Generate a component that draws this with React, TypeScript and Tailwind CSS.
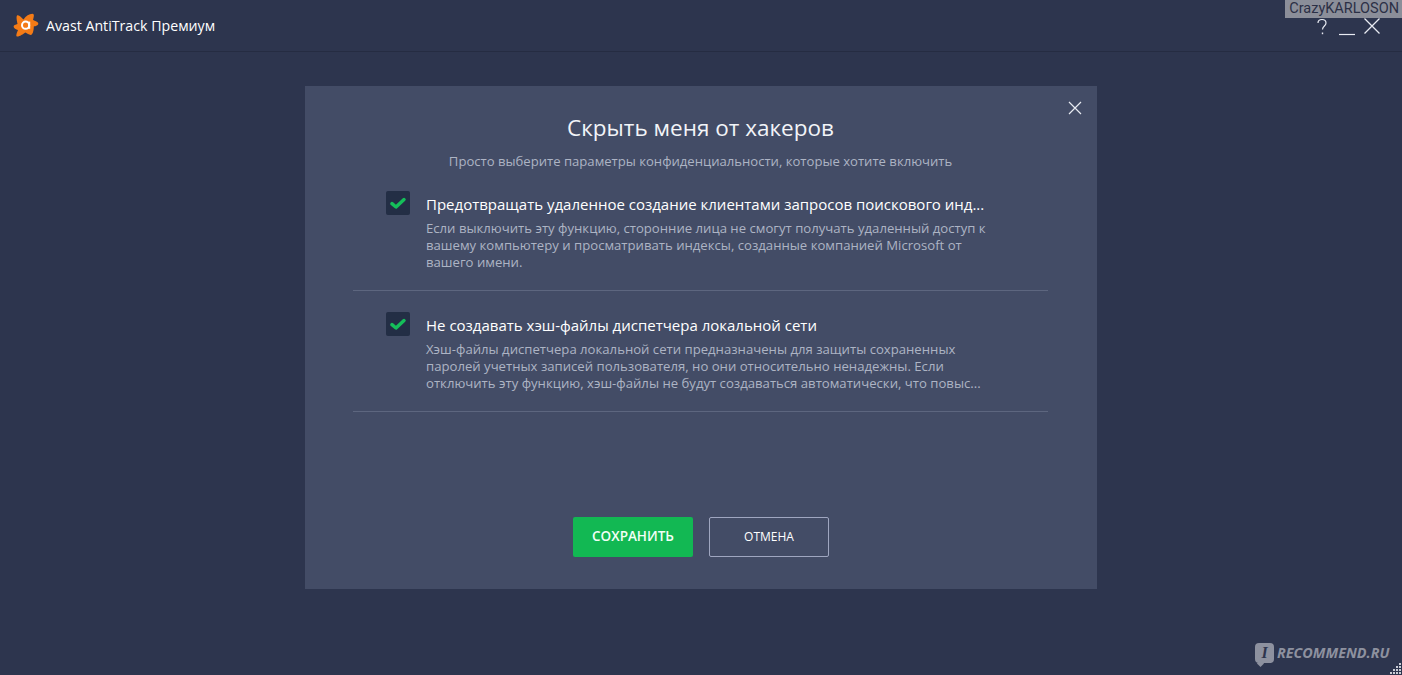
import React from "react";

const font = { fontFamily: '"Open Sans", "Noto Sans", sans-serif' };

function Logo() {
  return (
    <svg width="26" height="26" viewBox="0 0 26 26" className="shrink-0">
      <path
        d="M4 2.5 C5.5 1 8.5 4.5 10.5 6.5 C13 3 16 1 19.5 0.8 C21.5 1 21 3.5 20 7 C22 8 25 8.5 25.3 10.5 C25.5 12.5 22.5 13 20.8 13.6 C20.8 16 20.5 19.5 18.8 21.5 C17 22.8 14.5 20.5 12.5 19.5 C10 21 6 24 4 23.5 C2.5 23 4 19.5 5 17 C3 16.5 0.6 15.5 0.6 13.5 C0.8 12 2.5 11.5 4.5 11 C4 8 3 4 4 2.5 Z"
        fill="#f47b16"
      />
      <circle cx="12.6" cy="12.2" r="3.6" fill="none" stroke="#fff" strokeWidth="2" />
      <path d="M16.2 8.6 V15.8" stroke="#fff" strokeWidth="2" />
    </svg>
  );
}

function Check() {
  return (
    <div className="flex h-6 w-6 shrink-0 items-center justify-center rounded-[2px] bg-[#232e45]">
      <svg width="16" height="13" viewBox="0 0 16 13">
        <path d="M2 6.6 L6 10 L14 2.6" fill="none" stroke="#15bf5a" strokeWidth="3.4" strokeLinecap="round" strokeLinejoin="round" />
      </svg>
    </div>
  );
}

function Option({ title, lines, className }: { title: string; lines: string[]; className: string }) {
  return (
    <div className={`flex gap-[16px] border-b border-[#5d667f] pl-[33px] ${className}`}>
      <Check />
      <div className="pt-[1px]">
        <div className="whitespace-nowrap text-[15px] leading-[24px] text-white">{title}</div>
        <div className="mt-[4px] text-[13.15px] leading-[17px] text-[#adb4c4]">
          {lines.map((l) => (
            <div key={l} className="whitespace-nowrap">{l}</div>
          ))}
        </div>
      </div>
    </div>
  );
}

export default function App() {
  return (
    <div className="relative h-[675px] w-[1402px] overflow-hidden bg-[#2d354e]" style={font}>
      <header className="flex h-[52px] items-center border-b border-[#252c42] pl-[13px] pr-[22px]">
        <Logo />
        <span className="ml-[7px] text-[14.2px] text-white">Avast AntiTrack Премиум</span>
        <div className="ml-auto flex items-center text-[#e8ebf2]">
          <svg width="12" height="18" viewBox="0 0 12 18" className="mt-[2px]">
            <path d="M2 5 C2 2.5 4 1.5 6 1.5 C8.5 1.5 10 3 10 5 C10 8 6.5 8 6.5 11.5" fill="none" stroke="currentColor" strokeWidth="1.2" />
            <path d="M6.5 14.5 V16.2" stroke="currentColor" strokeWidth="1.4" />
          </svg>
          <svg width="16" height="18" viewBox="0 0 16 18" className="ml-[11px] mt-[2px]">
            <path d="M0 16.5 H16" stroke="currentColor" strokeWidth="1.2" />
          </svg>
          <svg width="16" height="16" viewBox="0 0 16 16" className="ml-[9px]">
            <path d="M0.5 0.5 L15.5 15.5 M15.5 0.5 L0.5 15.5" stroke="currentColor" strokeWidth="1.3" />
          </svg>
        </div>
      </header>

      <main className="pt-[34px]">
        <section className="relative ml-[305px] flex h-[503px] w-[792px] flex-col bg-[#434c66] pl-[48px] pr-[49px]">
          <button className="absolute right-[15px] top-[15px] text-[#e8ebf2]">
            <svg width="14" height="14" viewBox="0 0 14 14" className="block">
              <path d="M1 1 L13 13 M13 1 L1 13" stroke="currentColor" strokeWidth="1.2" />
            </svg>
          </button>
          <h1 className="pt-[25px] text-center text-[22.5px] leading-[34px] text-[#f2f4f8]">Скрыть меня от хакеров</h1>
          <p className="mt-[7px] text-center text-[13.1px] leading-[18px] text-[#adb4c4]">
            Просто выберите параметры конфиденциальности, которые хотите включить
          </p>
          <div className="mt-[21px]">
            <Option
              className="h-[100px]"
              title="Предотвращать удаленное создание клиентами запросов поискового инд..."
              lines={[
                "Если выключить эту функцию, сторонние лица не смогут получать удаленный доступ к",
                "вашему компьютеру и просматривать индексы, созданные компанией Microsoft от",
                "вашего имени.",
              ]}
            />
            <Option
              className="h-[121px] pt-[21px]"
              title="Не создавать хэш-файлы диспетчера локальной сети"
              lines={[
                "Хэш-файлы диспетчера локальной сети предназначены для защиты сохраненных",
                "паролей учетных записей пользователя, но они относительно ненадежны. Если",
                "отключить эту функцию, хэш-файлы не будут создаваться автоматически, что повыс...",
              ]}
            />
          </div>
          <div className="mt-[105px] flex justify-center gap-[16px] pl-[1px]">
            <button className="h-[40px] w-[120px] rounded-[2px] bg-[#12b853] pb-[1px] text-[13.5px] font-semibold text-[#f2fff6]">
              СОХРАНИТЬ
            </button>
            <button className="h-[40px] w-[120px] rounded-[2px] border border-[#9fa6c0] pb-[1px] text-[12px] text-white">
              ОТМЕНА
            </button>
          </div>
        </section>
      </main>

      <div className="absolute right-0 top-0 bg-[#8b8e99] pl-[4px] pr-[3px] text-[14.5px] leading-[18px] text-[#2b3046]" style={{ fontFamily: "Roboto, sans-serif" }}>
        CrazyKARLOSON
      </div>
      <div className="absolute left-[1255px] top-[642px] flex items-center gap-[3px]">
        <div className="relative flex h-[20px] w-[19px] items-center justify-center rounded-[4px] bg-[#8d919f] text-[16px] font-bold italic leading-none text-[#2d354e]" style={{ fontFamily: '"Liberation Serif", serif' }}>
          I
          <div className="absolute -bottom-[3px] left-[3px] h-[5px] w-[5px] rotate-45 bg-[#8d919f]" />
        </div>
        <span className="text-[14.4px] font-bold italic text-[#8d919f]" style={{ fontFamily: '"Open Sans", sans-serif' }}>
          RECOMMEND.RU
        </span>
      </div>
      <svg width="12" height="12" viewBox="0 0 12 12" className="absolute bottom-0 right-0 text-[#c9ccd6]">
        <g fill="currentColor">
          <rect x="9" y="0" width="2" height="2" />
          <rect x="6" y="3" width="2" height="2" />
          <rect x="9" y="3" width="2" height="2" />
          <rect x="3" y="6" width="2" height="2" />
          <rect x="6" y="6" width="2" height="2" />
          <rect x="9" y="6" width="2" height="2" />
          <rect x="0" y="9" width="2" height="2" />
          <rect x="3" y="9" width="2" height="2" />
          <rect x="6" y="9" width="2" height="2" />
          <rect x="9" y="9" width="2" height="2" />
        </g>
      </svg>
    </div>
  );
}
